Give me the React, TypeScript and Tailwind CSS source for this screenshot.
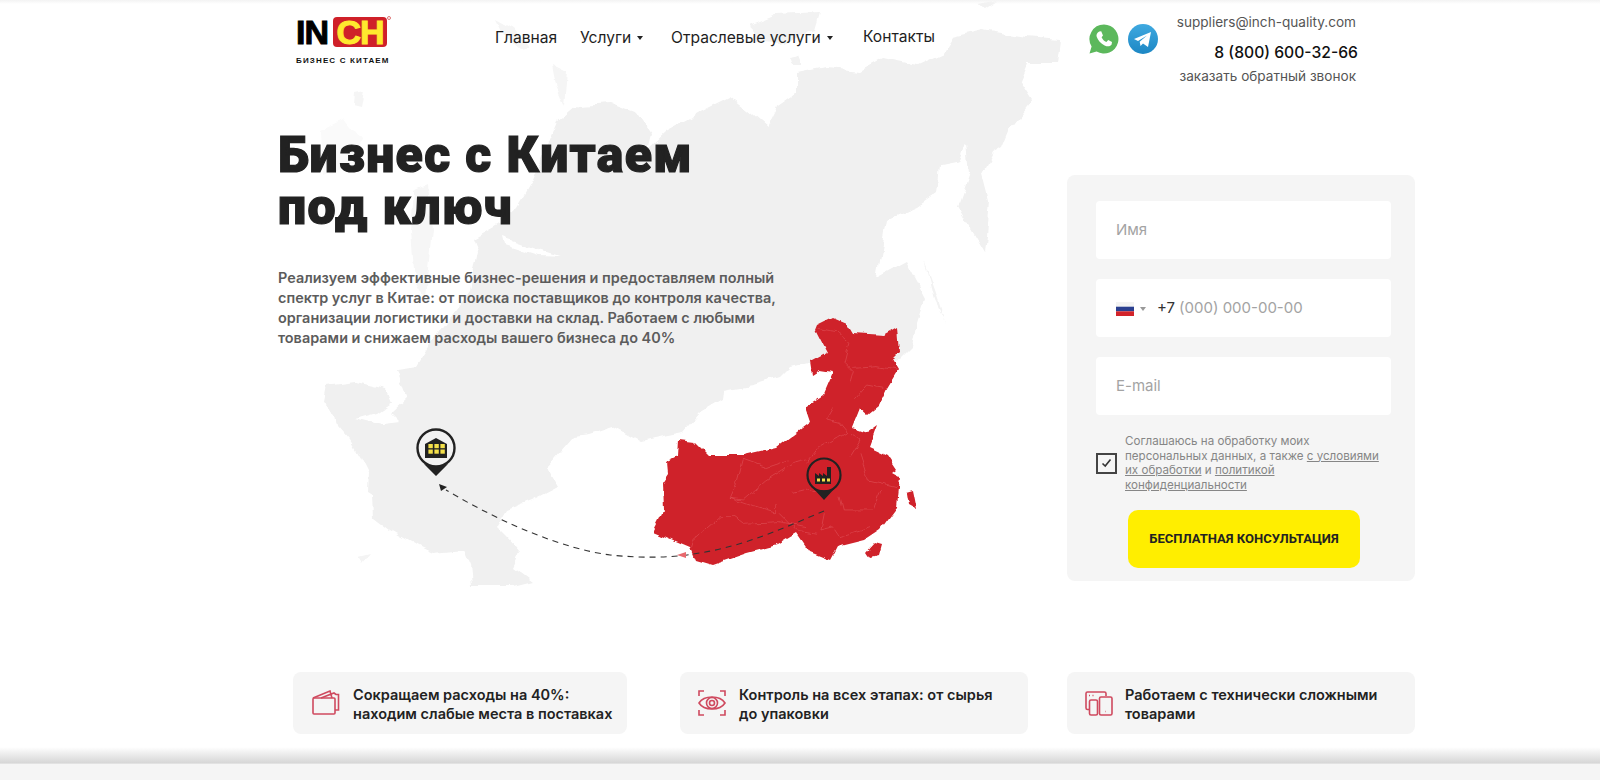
const GREY = "517,207 533,180 557,123 578,105 610,103 635,112 650,134 646,150 667,130 710,107 730,97 747,110 767,127 777,107 797,93 797,73 827,67 860,70 883,58 917,65 943,53 953,37 983,30 1027,37 1060,40 1057,63 1027,63 1020,80 1033,100 1010,130 1003,147 993,153 983,173 990,200 987,233 985,253 967,223 958,207 970,173 967,143 960,163 940,167 937,193 917,207 887,220 877,277 905,262 925,300 918,322 913,347 900,360 833,370 810,362 790,367 780,377 753,385 723,390 722,400 700,413 683,433 663,437 640,442 612,427 587,435 573,437 547,467 558,487 533,500 507,510 497,527 507,537 520,552 513,567 533,582 513,587 472,587 470,567 463,550 433,553 420,547 390,530 373,517 372,495 367,492 368,473 360,457 350,440 337,425 335,413 322,403 325,387 357,383 387,390 392,402 377,412 355,418 383,425 400,423 390,413 407,397 397,370 417,367 440,330 470,290 478,250 473,237 503,220";
const RED = "817,325 833,317 847,323 853,333 883,335 897,327 899,353 892,360 898,370 887,388 878,407 868,415 860,408 852,428 867,433 878,425 870,447 887,455 897,470 893,473 900,477 897,507 880,530 865,540 837,547 830,560 810,552 797,533 777,545 747,553 712,565 695,560 690,548 652,532 663,510 662,482 668,473 667,462 677,457 678,440 695,442 708,455 743,455 777,447 790,437 810,422 805,407 823,395 833,372 820,370 812,375 810,362 827,353 815,330";
const LINES = [
  "590,85 650,95 690,130 675,190 700,215 690,250",
  "700,205 770,200 830,210",
  "700,300 740,255 790,265",
  "640,325 620,360 660,370 680,395 640,420 590,450 560,490",
  "690,400 720,420 690,470",
  "370,475 350,550 330,595 370,600 440,540 520,490 560,480",
  "370,475 440,500 500,480",
  "330,595 400,620 470,640 470,610",
  "345,650 300,650 220,720 215,745",
  "345,650 370,670 480,665 560,680",
  "520,580 560,570 590,580",
  "720,460 745,540 830,560",
  "660,590 670,630 760,630 780,570",
  "610,640 600,690 640,680 660,710 750,680",
  "480,640 530,690 590,700",
];

function MapArt() {
  return (
    <svg className="absolute left-0 top-0" width="1600" height="780" viewBox="0 0 1600 780" fill="none">
      <defs>
        <filter id="coast" x="0" y="0" width="1600" height="780" filterUnits="userSpaceOnUse">
          <feTurbulence type="fractalNoise" baseFrequency="0.045" numOctaves="3" seed="7" result="n" />
          <feDisplacementMap in="SourceGraphic" in2="n" scale="10" xChannelSelector="R" yChannelSelector="G" />
          <feGaussianBlur stdDeviation="0.5" />
        </filter>
        <filter id="coastRed" x="0" y="0" width="1600" height="780" filterUnits="userSpaceOnUse">
          <feTurbulence type="fractalNoise" baseFrequency="0.07" numOctaves="3" seed="3" result="n" />
          <feDisplacementMap in="SourceGraphic" in2="n" scale="6" xChannelSelector="R" yChannelSelector="G" />
          <feGaussianBlur stdDeviation="0.35" />
        </filter>
      </defs>
      <g filter="url(#coast)">
        <polygon points={GREY} fill="#f0f0f0" />
        <polygon points="497,18 515,28 530,48 522,50 505,35" fill="#f5f5f5" />
        <polygon points="552,64 568,72 565,105 556,85" fill="#f5f5f5" />
        <polygon points="750,25 775,15 820,13 815,30 780,43 755,42" fill="#f2f2f2" />
        <polygon points="787,57 798,55 802,65 790,65" fill="#f2f2f2" />
        <polygon points="977,4 997,0 985,8" fill="#f2f2f2" />
        <polygon points="925,262 935,290 945,320 935,300" fill="#f2f2f2" />
        <polygon points="413,190 428,183 432,230 425,300 414,280 410,230" fill="#f6f6f6" />
        <polygon points="355,92 365,90 362,106 354,104" fill="#f5f5f5" />
        <polygon points="320,130 345,118 362,140 345,170 322,176" fill="#fafafa" />
        <polygon points="503,237 540,250 563,257 540,256 505,245" fill="#ffffff" />
        <polygon points="358,556 370,553 362,563" fill="#f4f4f4" />
      </g>
      <g filter="url(#coastRed)">
        <polygon points={RED} fill="#cf2029" />
        <polygon points="906,492 913,490 917,510 908,505" fill="#cf2029" />
        <polygon points="866,552 874,543 881,545 878,556 870,558" fill="#cf2029" />
        <g transform="translate(620 300) scale(0.3333)" stroke="#df5459" strokeWidth="1.8" fill="none">
          {LINES.map((l) => (
            <polyline key={l} points={l} />
          ))}
        </g>
      </g>
      <path d="M824 511C790 525 745 547 693 554C670 558 640 558 610 555C565 549 505 525 446 490" stroke="#333" strokeWidth="1.1" strokeDasharray="6 5" />
      <polygon points="439,484 447,487 441,491" fill="#222" />
      <polygon points="677,555 686,552 686,558" fill="#e8696d" />
      <circle cx="436" cy="448" r="18.5" fill="#f2f2f2" stroke="#222" strokeWidth="2.4" />
      <path d="M424 464L436 476L448 464C441 467 431 467 424 464Z" fill="#222" />
      <path d="M425 444L436 438L447 444V458H425Z" fill="#222" />
      <g fill="#f4e04a">
        {[429, 435, 441].map((x) =>
          [444, 449.5].map((y) => <rect key={`${x}-${y}`} x={x - 0.6} y={y} width="4.4" height="4.2" />)
        )}
      </g>
      <circle cx="824" cy="475" r="16.5" fill="#cf2029" stroke="#222" strokeWidth="2.2" />
      <path d="M813 488L824 500L835 488C828 491 820 491 813 488Z" fill="#222" />
      <path d="M815 484V473L819 476V473L823 476V473L827 476V467H831V484Z" fill="#222" />
      <g fill="#f4e04a">
        <rect x="817" y="478.5" width="3" height="3" />
        <rect x="822" y="478.5" width="3" height="3" />
        <rect x="827" y="478.5" width="3" height="3" />
      </g>
    </svg>
  );
}

function Logo() {
  return (
    <div className="w-[199px] shrink-0 pt-[17px]">
      <div className="flex h-[30px] items-center">
        <span className="w-[37px] font-['Liberation_Sans',sans-serif] text-[34px] font-bold leading-none tracking-[-1px] text-black [-webkit-text-stroke:1px_#000]">IN</span>
        <span className="relative flex h-[30px] w-[54px] items-center justify-center rounded-[4px] bg-[#cf2029] font-['Liberation_Sans',sans-serif] text-[34px] font-bold leading-none tracking-[-1px] text-[#ffe92e] [-webkit-text-stroke:1px_#ffe92e]">
          CH
          <span className="absolute -right-[4px] -top-[1px] h-[4px] w-[4px] rounded-full border border-[#d77]" />
        </span>
      </div>
      <div className="mt-[9px] font-['Liberation_Sans',sans-serif] text-[8px] font-bold leading-[10px] tracking-[1.15px] text-[#111]">БИЗНЕС С КИТАЕМ</div>
    </div>
  );
}

function Caret() {
  return <span className="ml-[6px] inline-block h-0 w-0 border-x-[3px] border-t-[4px] border-x-transparent border-t-[#222]" />;
}

function Header() {
  return (
    <header className="relative flex h-[100px] items-start pl-[296px]">
      <Logo />
      <nav className="flex h-[76px] w-[594px] shrink-0 items-center text-[15.6px] text-[#1e1e1e]">
        <span className="w-[85px]">Главная</span>
        <span className="flex w-[91px] items-center">Услуги<Caret /></span>
        <span className="flex w-[192px] items-center">Отраслевые услуги<Caret /></span>
        <span className="-translate-y-[1px]">Контакты</span>
      </nav>
      <div className="flex w-[80px] shrink-0 gap-[9px] pt-[24px]">
        <svg width="30" height="30" viewBox="0 0 30 30">
          <path d="M15 0.5A14.5 14.5 0 1 1 7.6 27.5L0.5 29.5L2.6 22.5A14.5 14.5 0 0 1 15 0.5Z" fill="#5cb85c" />
          <path d="M10.2 7.5L12.2 7.3L14 11.4L12.6 13.3C13.6 15.6 15.2 17.1 17.4 18L19.2 16.1L23 18.1L22.6 20.5C21.4 22.5 18.6 22.8 15.6 21.4C11.8 19.7 8.8 16.4 7.7 12.8C7 10.6 8.2 8.4 10.2 7.5Z" fill="#fff" />
        </svg>
        <svg width="30" height="30" viewBox="0 0 30 30">
          <defs>
            <linearGradient id="tg" x1="0" y1="0" x2="0" y2="1">
              <stop offset="0" stopColor="#3fa9e0" />
              <stop offset="1" stopColor="#1d87c4" />
            </linearGradient>
          </defs>
          <circle cx="15" cy="15" r="15" fill="url(#tg)" />
          <path d="M6 15L23 8L20 23L15 19.5L12.5 22L11.7 17.8L19 11.5L10 17Z" fill="#fff" />
        </svg>
      </div>
      <div className="w-[187px] pt-[13px] text-right">
        <div className="text-[13.6px] leading-[18px] text-[#555]">suppliers@inch-quality.com</div>
        <div className="-mr-[2px] mt-[11px] text-[15.7px] font-medium leading-[22px] text-[#111]">8 (800) 600-32-66</div>
        <div className="mt-[3px] text-[13.6px] leading-[18px] text-[#555]">заказать обратный звонок</div>
      </div>
    </header>
  );
}

function Field({ children }: { children: React.ReactNode }) {
  return <div className="flex h-[58px] items-center rounded-[4px] bg-white pl-[20px] pt-[1px] text-[15px] text-[#a3a3a3]">{children}</div>;
}

function Form() {
  return (
    <form className="mt-[75px] flex h-[406px] w-[348px] flex-col rounded-[8px] bg-[#f5f5f5] pl-[29px] pr-[24px] pt-[26px]">
      <div className="flex flex-col gap-[20px]">
        <Field>Имя</Field>
        <Field>
          <svg width="18" height="14" viewBox="0 0 18 14" className="mr-[6px]">
            <rect width="18" height="4.7" fill="#f3f3f3" />
            <rect y="4.7" width="18" height="4.6" fill="#2a3f8f" />
            <rect y="9.3" width="18" height="4.7" fill="#d2232a" />
          </svg>
          <span className="mr-[11px] h-0 w-0 border-x-[3.5px] border-t-[4px] border-x-transparent border-t-[#999]" />
          <span className="text-[#333]">+7</span>
          <span className="ml-[4px]">(000) 000-00-00</span>
        </Field>
        <Field>E-mail</Field>
      </div>
      <div className="mt-[19px] flex items-center">
        <div className="flex h-[21px] w-[21px] shrink-0 items-center justify-center border-2 border-[#444]">
          <svg width="11" height="10" viewBox="0 0 11 10" fill="none">
            <path d="M1.5 5.5L4.2 8L9.5 1.5" stroke="#333" strokeWidth="1.6" />
          </svg>
        </div>
        <p className="ml-[8px] whitespace-nowrap text-[11.6px] leading-[14.5px] text-[#868686]">
          Соглашаюсь на обработку моих
          <br />
          персональных данных, а также <span className="underline">с условиями</span>
          <br />
          <span className="underline">их обработки</span> и <span className="underline">политикой</span>
          <br />
          <span className="underline">конфиденциальности</span>
        </p>
      </div>
      <button type="button" className="ml-[32px] mt-[18px] h-[58px] w-[232px] rounded-[10px] bg-[#ffee00] font-[Roboto,sans-serif] text-[13px] font-bold uppercase text-[#222]">
        Бесплатная консультация
      </button>
    </form>
  );
}

function Card({ cls, icon, children }: { cls: string; icon: React.ReactNode; children: React.ReactNode }) {
  return (
    <div className={`flex h-[62px] items-center rounded-[8px] bg-[#f5f5f5] ${cls}`}>
      {icon}
      <div className="pt-[1px] text-[14.5px] font-semibold leading-[19px] text-[#222]">{children}</div>
    </div>
  );
}

const iconStroke = "#cf4a5f";

export default function App() {
  return (
    <div className="relative flex h-[780px] w-full flex-col overflow-hidden bg-white font-[Inter,sans-serif]">
      <MapArt />
      <div className="absolute left-0 top-0 h-[4px] w-full bg-gradient-to-b from-[#f3f3f3] to-transparent" />
      <Header />
      <main className="relative ml-[278px] flex h-[572px] w-[1137px] items-start justify-between">
        <div className="pt-[29px]">
          <h1 className="font-[Roboto,sans-serif] text-[50px] font-black leading-[52px] tracking-[1.35px] text-[#222] [-webkit-text-stroke:1.2px_#222]">
            Бизнес с Китаем
            <br />
            под ключ
          </h1>
          <p className="mt-[35px] text-[14.45px] font-semibold leading-[20px] text-[#5c5c5c]">
            Реализуем эффективные бизнес-решения и предоставляем полный
            <br />
            спектр услуг в Китае: от поиска поставщиков до контроля качества,
            <br />
            организации логистики и доставки на склад. Работаем с любыми
            <br />
            товарами и снижаем расходы вашего бизнеса до 40%
          </p>
        </div>
        <Form />
      </main>
      <section className="relative ml-[293px] flex">
        <Card
          cls="w-[334px] pl-[19px] gap-[13px]"
          icon={
            <svg width="28" height="26" viewBox="0 0 28 26" fill="none" stroke={iconStroke} strokeWidth="1.6" className="shrink-0">
              <rect x="1" y="8" width="22" height="16" rx="1" />
              <path d="M1 8L18 1L20 8M9 8L22 3L24 4.5H26.5V20H23" />
            </svg>
          }
        >
          Сокращаем расходы на 40%:
          <br />
          находим слабые места в поставках
        </Card>
        <Card
          cls="ml-[53px] w-[348px] pl-[18px] gap-[13px]"
          icon={
            <svg width="28" height="26" viewBox="0 0 28 26" fill="none" stroke={iconStroke} strokeWidth="1.6" className="shrink-0">
              <path d="M1 6V1H6M22 1H27V6M1 20V25H6M22 25H27V20" />
              <path d="M1 13C6 5 22 5 27 13C22 21 6 21 1 13Z" />
              <circle cx="14" cy="13" r="5.5" />
              <circle cx="14" cy="13" r="2.5" />
            </svg>
          }
        >
          Контроль на всех этапах: от сырья
          <br />
          до упаковки
        </Card>
        <Card
          cls="ml-[39px] w-[348px] pl-[18px] gap-[12px]"
          icon={
            <svg width="28" height="25" viewBox="0 0 28 25" fill="none" stroke={iconStroke} strokeWidth="1.6" className="shrink-0">
              <path d="M21 5V2.5A1.5 1.5 0 0 0 19.5 1H2.5A1.5 1.5 0 0 0 1 2.5V17A1.5 1.5 0 0 0 2.5 18.5H4" />
              <rect x="4.5" y="9" width="8" height="15" rx="1.5" />
              <rect x="14.5" y="6" width="12.5" height="18" rx="1.5" />
              <path d="M4 4.5H5M7.5 4.5H8.5M20.5 20.5H21" />
            </svg>
          }
        >
          Работаем с технически сложными
          <br />
          товарами
        </Card>
      </section>
      <div className="relative mt-[13px] h-[16px] shrink-0 bg-gradient-to-b from-white to-[#d6d6d6]" />
      <div className="relative flex-1 border-t border-[#e2e2e2] bg-[#f5f5f5]" />
    </div>
  );
}
